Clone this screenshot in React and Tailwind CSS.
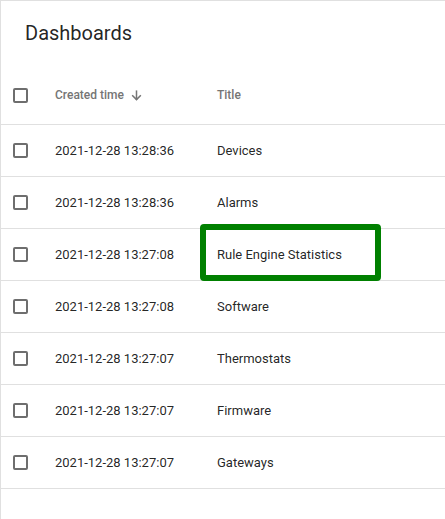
import React from "react";

const rows = [
  ["2021-12-28 13:28:36", "Devices"],
  ["2021-12-28 13:28:36", "Alarms"],
  ["2021-12-28 13:27:08", "Rule Engine Statistics", true],
  ["2021-12-28 13:27:08", "Software"],
  ["2021-12-28 13:27:07", "Thermostats"],
  ["2021-12-28 13:27:07", "Firmware"],
  ["2021-12-28 13:27:07", "Gateways"],
];

function Box() {
  return <div className="w-[15px] h-[15px] border-2 border-[#6e6e6e] rounded-[2px]" />;
}

export default function App() {
  return (
    <div className="w-[445px] h-[519px] bg-white border-l border-t border-[#e0e0e0] font-['Roboto',sans-serif] overflow-hidden">
      <div className="h-[67px] pt-[20px] pl-[24px] text-[20px] leading-[24px] text-[rgba(0,0,0,0.87)]">
        Dashboards
      </div>
      <div className="h-[57px] pb-[2px] flex items-center border-b border-[#e0e0e0]">
        <div className="w-[54px] pl-[12px]">
          <Box />
        </div>
        <div className="w-[162px] flex items-center gap-[6px] text-[12px] font-medium text-[#757575]">
          <span>Created time</span>
          <svg width="13" height="13" viewBox="0 0 24 24" fill="none" stroke="#757575" strokeWidth="2.8" strokeLinecap="square">
            <path d="M12 4v15" />
            <path d="M5 12.5l7 7 7-7" />
          </svg>
        </div>
        <div className="text-[12px] font-medium text-[#757575]">Title</div>
      </div>
      {rows.map(([t, title, hl], i) => (
        <div key={i} className="h-[52px] flex items-center border-b border-[#e0e0e0] text-[13px] text-[rgba(0,0,0,0.87)]">
          <div className="w-[54px] pl-[12px]">
            <Box />
          </div>
          <div className="w-[162px]">{t}</div>
          <div className="relative">
            {title}
            {hl && (
              <div className="absolute -left-[17px] -top-[21px] w-[181px] h-[57px] border-[6px] border-[#008000] rounded-[4px]" />
            )}
          </div>
        </div>
      ))}
    </div>
  );
}
